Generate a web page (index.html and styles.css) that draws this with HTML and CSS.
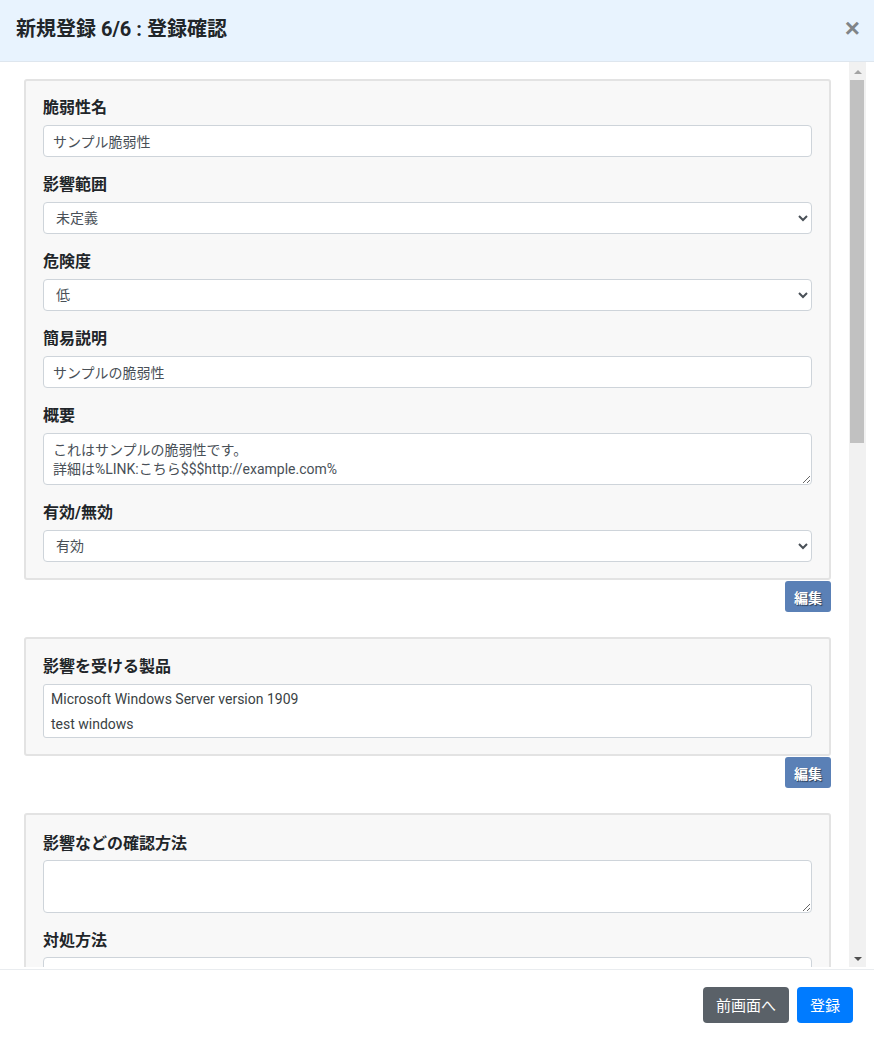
FILE: index.html
```html
<!DOCTYPE html>
<html lang="ja">
<head>
<meta charset="utf-8">
<title>新規登録 6/6 : 登録確認</title>
<meta name="viewport" content="width=device-width, minimum-scale=1.0, maximum-scale=1.0" />
<link rel="stylesheet" href="styles.css">
</head>
<body>
<div class="modal">
  <div class="modal-header">
    <h5 class="modal-title">新規登録 6/6 : 登録確認</h5>
    <button type="button" class="close">&times;</button>
  </div>

  <div class="modal-body">
    <div class="scroller">

      <!--basic info-->
      <div class="card">
        <div class="form-group">
          <label>脆弱性名</label>
          <input type="text" class="form-control" value="サンプル脆弱性" readonly>
        </div>
        <div class="form-group">
          <label>影響範囲</label>
          <select class="form-control">
            <option>未定義</option>
          </select>
        </div>
        <div class="form-group">
          <label>危険度</label>
          <select class="form-control">
            <option>低</option>
          </select>
        </div>
        <div class="form-group">
          <label>簡易説明</label>
          <input type="text" class="form-control" value="サンプルの脆弱性" readonly>
        </div>
        <div class="form-group">
          <label>概要</label>
          <textarea class="form-control area" readonly>これはサンプルの脆弱性です。
詳細は%LINK:こちら$$$http://example.com%</textarea>
        </div>
        <div class="form-group">
          <label>有効/無効</label>
          <select class="form-control">
            <option>有効</option>
          </select>
        </div>
      </div>
      <div class="edit-row"><button type="button" class="btn-edit">編集</button></div>

      <!--products-->
      <div class="card card-products">
        <div class="form-group">
          <label>影響を受ける製品</label>
          <ul class="list-box">
            <li>Microsoft Windows Server version 1909</li>
            <li>test windows</li>
          </ul>
        </div>
      </div>
      <div class="edit-row"><button type="button" class="btn-edit">編集</button></div>

      <!--countermeasures-->
      <div class="card card-measures">
        <div class="form-group">
          <label>影響などの確認方法</label>
          <textarea class="form-control area" readonly></textarea>
        </div>
        <div class="form-group">
          <label>対処方法</label>
          <textarea class="form-control area" readonly></textarea>
        </div>
      </div>

    </div>

    <!--scrollbar of the body-->
    <div class="scrollbar">
      <div class="sb-btn sb-up"></div>
      <div class="sb-thumb"></div>
      <div class="sb-btn sb-down"></div>
    </div>
  </div>

  <div class="modal-footer">
    <button type="button" class="btn btn-secondary">前画面へ</button>
    <button type="button" class="btn btn-primary">登録</button>
  </div>
</div>
</body>
</html>
```

FILE: styles.css
```css
* { margin: 0; padding: 0; box-sizing: border-box; list-style: none; }
html, body { height: 100%; }
body { font-family: "Roboto", "Noto Sans CJK JP", sans-serif; font-size: 14px; color: #212529; background: #fff; overflow: hidden; }

.modal { display: flex; flex-direction: column; height: 100vh; }

/*header*/
.modal-header { flex: 0 0 62px; display: flex; align-items: center; justify-content: space-between; padding: 0 16px; background: #e8f3fe; border-bottom: 1px solid #dee6ee; }
.modal-title { font-size: 20px; font-weight: 700; line-height: 26px; color: #212529; margin-top: -4px; }
.close { border: 0; background: transparent; font-family: "Liberation Sans", sans-serif; font-size: 26px; font-weight: 700; line-height: 1; color: #808488; margin-top: -6px; margin-right: -2px; cursor: pointer; }

/*body*/
.modal-body { flex: 1 1 auto; min-height: 0; display: flex; padding-right: 8px; padding-bottom: 2px; }
.scroller { flex: 1 1 auto; min-width: 0; overflow: hidden; padding: 17px 18px 0 24px; }

.scrollbar { flex: 0 0 17px; display: flex; flex-direction: column; background: #f1f1f1; }
.sb-btn { height: 17px; display: flex; align-items: center; justify-content: center; }
.sb-btn::before { content: ""; width: 0; height: 0; border-left: 4px solid transparent; border-right: 4px solid transparent; }
.sb-up::before { border-bottom: 4px solid #a3a3a3; margin-top: 2px; }
.sb-down { margin-top: auto; }
.sb-down::before { border-top: 4px solid #505050; margin-top: 1px; }
.sb-thumb { height: 363px; margin: 1px 2px 0 1px; background: #c1c1c1; }

.card { background: #f8f8f8; border: 2px solid #e3e3e3; border-radius: 3px; padding: 15px 17px 16px 17px; }
.card-products { padding-top: 16px; }
.card-measures { padding-top: 17px; }
.form-group { margin-bottom: 16px; }
.form-group:last-child { margin-bottom: 0; }
.form-group label { display: block; font-size: 16px; font-weight: 700; line-height: 24px; margin-bottom: 5px; color: #212529; }
.card-measures .form-group label { margin-bottom: 4px; }

.form-control { display: block; width: 100%; height: 32px; padding: 0 9px; font-family: "Roboto", "Noto Sans CJK JP", sans-serif; font-size: 14px; color: #495057; background: #fff; border: 1px solid #ced4da; border-radius: 4px; outline: none; }
select.form-control { padding: 0 8px 0 8px; }
textarea.area { height: 52px; padding: 7px 9px 0; line-height: 19px; resize: vertical; }
.card-measures textarea.area { height: 53px; }

.list-box { background: #fff; border: 1px solid #ced4da; border-radius: 3px; padding: 2px 7px 0; color: #3a3f44; font-size: 14px; }
.list-box li { line-height: 25px; }

.edit-row { display: flex; justify-content: flex-end; margin: 1px 0 25px; }
.btn-edit { height: 31px; padding: 0 9px; border: 0; border-radius: 3px; background: #5a80b6; color: #fff; font-family: "Noto Sans CJK JP", sans-serif; font-size: 14px; font-weight: 700; text-shadow: 1px 1px 1px rgba(0, 0, 0, 0.55); cursor: pointer; }

/*footer*/
.modal-footer { flex: 0 0 70px; display: flex; justify-content: flex-end; align-items: center; gap: 8px; padding: 0 21px 0 16px; border-top: 1px solid #e9ecef; }
.btn { height: 36px; padding: 0 13px; border: 0; border-radius: 4px; color: #fff; font-family: "Noto Sans CJK JP", sans-serif; font-size: 15px; cursor: pointer; }
.btn-secondary { background: #5a6168; }
.btn-primary { background: #007bff; }
```
